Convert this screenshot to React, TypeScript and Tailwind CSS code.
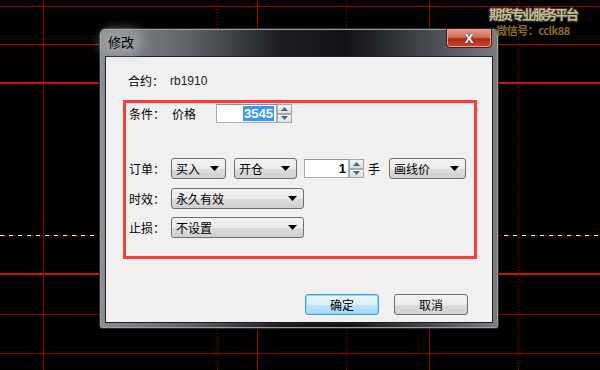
import React from 'react';

const hLines = [
  { y: 6, h: 1, c: 'bg-[#a00000]' },
  { y: 44, h: 1, c: 'bg-[#b00000]' },
  { y: 82, h: 2, c: 'bg-[#c8120a]' },
  { y: 273, h: 2, c: 'bg-[#c8120a]' },
  { y: 314, h: 1, c: 'bg-[#900000]' },
  { y: 353, h: 1, c: 'bg-[#900000]' },
];
const vSolid = [43, 257, 429];
const vDotted = [217, 346, 518];

const Arrow = () => (
  <svg width="9" height="5" viewBox="0 0 9 5" className="shrink-0">
    <path d="M0 0H9L4.5 5Z" fill="#000" />
  </svg>
);

const Select: React.FC<{ label: string; w: string }> = ({ label, w }) => (
  <div
    className={`${w} h-[21px] flex items-center justify-between pl-[4px] pr-[6px] rounded-[3px] border border-[#707070] bg-[linear-gradient(180deg,#f2f2f2_0%,#ebebeb_50%,#dddddd_51%,#cfcfcf_100%)] text-[12px] text-black`}
  >
    <span className="leading-none">{label}</span>
    <Arrow />
  </div>
);

const Spin: React.FC<{ value: string; w: string; selected?: boolean }> = ({ value, w, selected }) => (
  <div className="flex items-stretch h-[19px]">
    <div className={`${w} h-full flex items-center justify-end pr-[2px] border border-[#abadb3] border-t-[#8e9297] bg-white`}>
      {selected ? (
        <span className="bg-[#3399ff] text-white px-[1px] leading-[15px] text-[13px] font-['Liberation_Sans',sans-serif] font-bold">
          {value}
        </span>
      ) : (
        <span className="text-black text-[13px] font-bold leading-[15px] font-['Liberation_Sans',sans-serif]">{value}</span>
      )}
    </div>
    <div className="w-[15px] h-full flex flex-col">
      {[0, 1].map((i) => (
        <div
          key={i}
          className="flex-1 flex items-center justify-center border border-[#a9a9a9] bg-[linear-gradient(180deg,#f5f5f5,#dcdcdc)]"
        >
          <svg width="7" height="4" viewBox="0 0 7 4">
            <path d={i === 0 ? 'M0 4H7L3.5 0Z' : 'M0 0H7L3.5 4Z'} fill="#4d6185" />
          </svg>
        </div>
      ))}
    </div>
  </div>
);

const Button: React.FC<{ label: string; primary?: boolean }> = ({ label, primary }) => (
  <div
    className={`w-[74px] h-[21px] flex items-center justify-center rounded-[3px] text-[12px] text-black ${
      primary
        ? 'border border-[#3c9fe0] shadow-[inset_0_0_0_1px_#8fd6fb] bg-[linear-gradient(180deg,#eaf6fd_0%,#d9f0fc_50%,#bee6fd_51%,#a7d9f5_100%)]'
        : 'border border-[#707070] bg-[linear-gradient(180deg,#f2f2f2_0%,#ebebeb_50%,#dddddd_51%,#cfcfcf_100%)]'
    }`}
  >
    {label}
  </div>
);

export default function App() {
  return (
    <div className="relative w-[600px] h-[370px] overflow-hidden bg-black font-['Noto_Sans_CJK_SC','Liberation_Sans',sans-serif]">
      {/* chart grid */}
      {hLines.map((l) => (
        <div key={l.y} className={`absolute left-0 w-full ${l.c}`} style={{ top: l.y, height: l.h }} />
      ))}
      <div className="absolute left-0 w-full h-[1px] top-[235px] bg-[repeating-linear-gradient(90deg,#ffffff_0_4px,#880000_4px_7px,#000_7px_9px)]" />
      {vSolid.map((x) => (
        <div key={x} className="absolute top-0 h-full w-[1px] bg-[#a00000]" style={{ left: x }} />
      ))}
      {vDotted.map((x) => (
        <div
          key={x}
          className="absolute top-0 h-full w-[1px] bg-[repeating-linear-gradient(180deg,#b00000_0_1px,transparent_1px_3px)]"
          style={{ left: x }}
        />
      ))}

      {/* dialog window */}
      <div className="absolute left-[99px] top-[28px] w-[400px] h-[301px] rounded-t-[6px] rounded-b-[3px] border border-[#2a2c30] shadow-[inset_0_0_0_1px_#9a9ea3] bg-[linear-gradient(90deg,#8a8d91_0%,#606367_22%,#1c1e22_45%,#111316_62%,#4d5054_85%,#7a7d81_100%)] flex flex-col">
        {/* title bar */}
        <div className="relative h-[27px] flex items-start">
          <div className="ml-[4px] mt-[4px] px-[4px] py-[1px] rounded-full bg-[#b9bbbd]/40 shadow-[0_0_10px_5px_rgba(180,183,186,0.45)] text-[13px] text-black leading-[16px]">
            修改
          </div>
          <div className="absolute right-[6px] top-[-1px] w-[46px] h-[20px] rounded-b-[4px] border border-[#4a1a14] shadow-[inset_0_0_0_1px_#e8a08a] bg-[linear-gradient(180deg,#e0a392_0%,#cf6e56_45%,#b32a10_55%,#c8462a_100%)] flex items-center justify-center">
            <span className="text-white text-[13px] font-bold leading-none font-['Liberation_Sans',sans-serif] [text-shadow:0_0_2px_#333]">
              X
            </span>
          </div>
        </div>

        {/* client area */}
        <div className="mx-[5px] mb-[5px] flex-1 border border-[#1f2125] bg-[#f0f0f0] text-[12px] text-black flex flex-col">
          <div className="mt-[16px] ml-[22px] flex items-center h-[16px]">
            <span className="w-[42px]">合约：</span>
            <span className="text-[12px] text-[#222] font-['Liberation_Sans',sans-serif]">rb1910</span>
          </div>

          <div className="mt-[11px] ml-[17px] w-[354px] h-[159px] border-[3px] border-[#ff3b3b] flex flex-col pl-[3px]">
            <div className="mt-[1px] flex items-center h-[19px]">
              <span className="w-[43px]">条件：</span>
              <span className="w-[44px]">价格</span>
              <Spin value="3545" w="w-[61px]" selected />
            </div>

            <div className="mt-[35px] flex items-center h-[21px]">
              <span className="w-[42px]">订单：</span>
              <Select label="买入" w="w-[55px]" />
              <div className="w-[8px]" />
              <Select label="开仓" w="w-[63px]" />
              <div className="w-[7px]" />
              <Spin value="1" w="w-[45px]" />
              <span className="ml-[4px] w-[21px]">手</span>
              <Select label="画线价" w="w-[77px]" />
            </div>

            <div className="mt-[9px] flex items-center h-[21px]">
              <span className="w-[42px]">时效：</span>
              <Select label="永久有效" w="w-[133px]" />
            </div>

            <div className="mt-[8px] flex items-center h-[21px]">
              <span className="w-[42px]">止损：</span>
              <Select label="不设置" w="w-[133px]" />
            </div>
          </div>

          <div className="mt-[35px] ml-[199px] flex gap-[15px]">
            <Button label="确定" primary />
            <Button label="取消" />
          </div>
        </div>
      </div>

      {/* watermark, drawn over the dialog edge */}
      <div className="absolute right-[23px] top-[7px] flex flex-col items-center gap-[3px]">
        <span className="text-[13px] leading-[14px] tracking-[-2px] font-bold text-[#c9bd8c] [text-shadow:1px_1px_0_#333,-1px_-1px_0_#333,1px_-1px_0_#333,-1px_1px_0_#333]">
          期货专业服务平台
        </span>
        <span className="text-[11px] leading-[13px] tracking-[-0.5px] text-[#8a6c1c] font-bold">微信号：cclk88</span>
      </div>
    </div>
  );
}
